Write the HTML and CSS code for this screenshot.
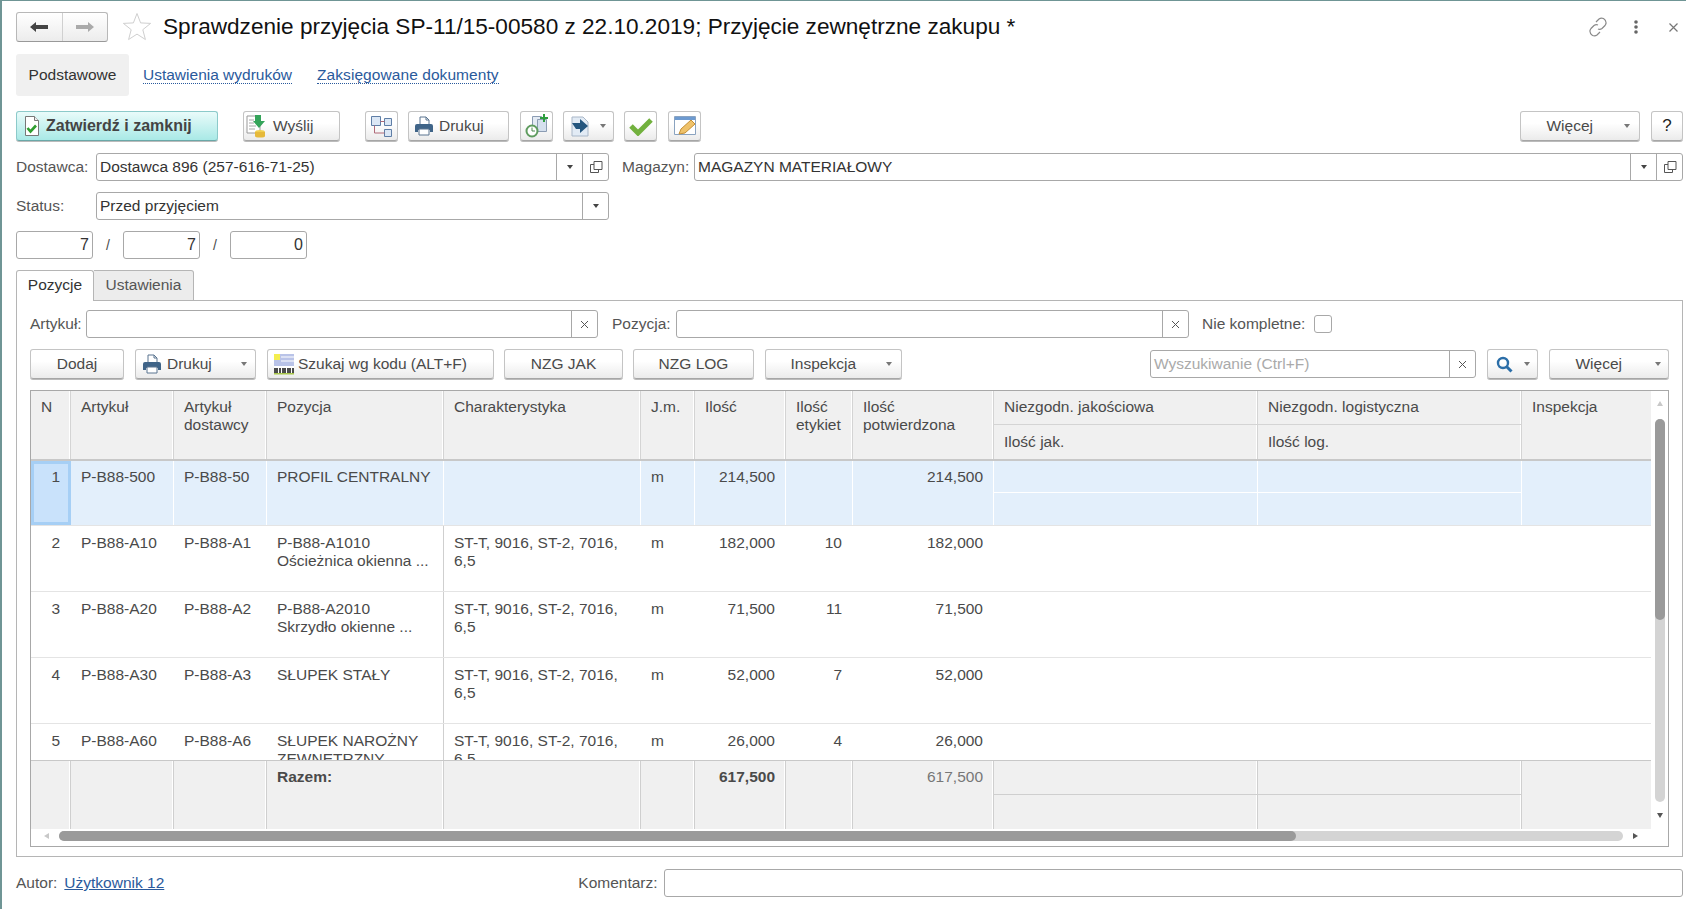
FILE: index.html
```html
<!DOCTYPE html>
<html>
<head>
<meta charset="utf-8">
<title>Sprawdzenie przyjęcia</title>
<link rel="stylesheet" href="styles.css">
</head>
<body>
<svg class="defs" width="0" height="0">
	<symbol id="printer" viewBox="0 0 20 20">
		<path d="M6 1h6l3 3v5H6z" fill="#fff" stroke="#5b7590"/>
		<path d="M12 1v3h3" fill="none" stroke="#5b7590"/>
		<path d="M1 10q0-2 2-2h14q2 0 2 2v6h-3v-2H4v2H1z" fill="#3f6488"/>
		<path d="M5 13h10v6H5z" fill="#fff" stroke="#5b7590"/>
	</symbol>
	<symbol id="open" viewBox="0 0 14 14">
		<path d="M5 1.500h8v8H5z" fill="none" stroke="#555"/>
		<path d="M5 4.500H1.500v8h8V9.500" fill="none" stroke="#555"/>
	</symbol>
</svg>
<div class="page">
	<div class="head">
		<div class="nav">
			<button class="nav-btn">
				<svg width="20" height="12" viewBox="0 0 20 12"><path d="M7 1 1 6l6 5V8h12V4H7z" fill="#444"/></svg>
			</button>
			<button class="nav-btn">
				<svg width="20" height="12" viewBox="0 0 20 12"><path d="M13 1l6 5-6 5V8H1V4h12z" fill="#aaa"/></svg>
			</button>
		</div>
		<svg class="star" width="30" height="30" viewBox="0 0 30 30"><path d="M15 1.500l3.600 9.400 10 .5-7.800 6.300 2.600 9.800L15 22.100 6.600 27.500l2.600-9.800-7.800-6.300 10-.5z" fill="#fff" stroke="#cfcfcf"/></svg>
		<h1 class="title">Sprawdzenie przyjęcia SP-11/15-00580 z 22.10.2019; Przyjęcie zewnętrzne zakupu *</h1>
		<div class="head-tools">
			<svg width="20" height="20" viewBox="0 0 20 20" fill="none" stroke="#8a8a8a" stroke-width="1.200"><path d="M8 5l3-3q2-1.500 4.500-.5 3 2 2.500 5-.3 1-1 2l-3 3q-2 1.500-4 .5"/><path d="M12 15l-3 3q-2 1.500-4.500.5-3-2-2.500-5 .3-1 1-2l3-3q2-1.500 4-.5"/></svg>
			<svg class="dots" width="6" height="14" viewBox="0 0 6 14"><circle cx="3" cy="2" r="1.800" fill="#666"/><circle cx="3" cy="7" r="1.800" fill="#666"/><circle cx="3" cy="12" r="1.800" fill="#666"/></svg>
			<svg class="close" width="9" height="9" viewBox="0 0 9 9"><path d="M.5.500l8 8M8.500.500l-8 8" stroke="#777" stroke-width="1.200"/></svg>
		</div>
	</div>

	<div class="sections">
		<span class="section-on">Podstawowe</span>
		<a class="section-link">Ustawienia wydruków</a>
		<a class="section-link">Zaksięgowane dokumenty</a>
	</div>

	<div class="toolbar">
		<button class="btn btn-main w-main">
			<svg width="16" height="20" viewBox="0 0 16 20"><path d="M1.500.500h9l4 4v15h-13z" fill="#fff" stroke="#777"/><path d="M10.500.500v4h4" fill="#eee" stroke="#777"/><path d="M3.500 12l3 3.500 5.500-6" fill="none" stroke="#2f9e2f" stroke-width="2.600"/></svg>
			<b>Zatwierdź i zamknij</b>
		</button>
		<button class="btn w-send ml-25">
			<svg width="22" height="24" viewBox="0 0 22 24"><path d="M1 2h13v17H1z" fill="#fff" stroke="#999"/><path d="M3 6h5M3 9h5M3 12h7M3 15h6" stroke="#a8a8a8"/><path d="M9 1h6v6h4l-6 7-6-7h2z" fill="#35a45a"/><ellipse cx="14" cy="18" rx="5" ry="2" fill="#f0cf50"/><path d="M9 18v4q0 1.500 5 1.500t5-1.500v-4" fill="#e6b93a"/></svg>
			<span>Wyślij</span>
		</button>
		<button class="btn w-icon ml-25">
			<svg width="24" height="24" viewBox="0 0 24 24"><path d="M1.500 2.500h9v9h-9zM14.500 4.500h7v7h-7zM14.500 15.500h7v7h-7z" fill="#dbe7f5" stroke="#5f7ea6"/><path d="M4.500 11.500v7.500h10M10.500 7.500h4" fill="none" stroke="#b06a78"/></svg>
		</button>
		<button class="btn w-print ml-10">
			<svg width="20" height="20"><use href="#printer"/></svg>
			<span>Drukuj</span>
		</button>
		<button class="btn w-icon ml-11">
			<svg width="24" height="24" viewBox="0 0 24 24"><path d="M7.500 2.500h9v12h-9z" fill="#e4ebf4" stroke="#8b9cb3"/><path d="M12.500 5.500h9v12h-9z" fill="#d5e0ee" stroke="#8b9cb3"/><path d="M18 0h2v3h3v2h-3v3h-2V5h-3V3h3z" fill="#2e9e3f"/><circle cx="7" cy="17" r="5.500" fill="#fff" stroke="#5f9c5f" stroke-width="2"/><path d="M7 13.500V17h3" fill="none" stroke="#4c8a4c"/></svg>
		</button>
		<button class="btn w-menu ml-10">
			<svg width="24" height="24" viewBox="0 0 24 24"><path d="M3 3h11l5 5v14H3z" fill="#e2ebf5" stroke="#a9b7c8"/><path d="M3 9h8V5l8 7-8 7v-4H7z" fill="#24567f"/></svg>
			<i class="caret"></i>
		</button>
		<button class="btn w-icon ml-10">
			<svg width="24" height="20" viewBox="0 0 24 20"><path d="M2 10l7 7L22 4" fill="none" stroke="#72b13e" stroke-width="5"/></svg>
		</button>
		<button class="btn w-icon ml-11">
			<svg width="24" height="24" viewBox="0 0 24 24"><path d="M1.500 2.500h21v18h-21z" fill="#fff" stroke="#8aa3c0"/><path d="M2 3h20v3H2z" fill="#6d9ad0"/><path d="M6 20l2-5L18 6l4 4-10 9z" fill="#efc26a" stroke="#c48f35"/></svg>
		</button>
		<button class="btn w-more push">
			<span>Więcej</span>
			<i class="caret"></i>
		</button>
		<button class="btn w-help ml-11"><span class="help">?</span></button>
	</div>

	<div class="form-row row-first">
		<label class="lbl w-lbl">Dostawca:</label>
		<div class="field w-supplier">
			<span class="field-text">Dostawca 896 (257-616-71-25)</span>
			<span class="field-btn"><i class="caret dark"></i></span>
			<span class="field-btn"><svg width="14" height="14"><use href="#open"/></svg></span>
		</div>
		<label class="lbl w-lbl2">Magazyn:</label>
		<div class="field w-store">
			<span class="field-text">MAGAZYN MATERIAŁOWY</span>
			<span class="field-btn"><i class="caret dark"></i></span>
			<span class="field-btn"><svg width="14" height="14"><use href="#open"/></svg></span>
		</div>
	</div>

	<div class="form-row row-status">
		<label class="lbl w-lbl">Status:</label>
		<div class="field w-supplier">
			<span class="field-text">Przed przyjęciem</span>
			<span class="field-btn"><i class="caret dark"></i></span>
		</div>
	</div>

	<div class="form-row row-counts">
		<div class="field w-count"><span class="field-text right">7</span></div>
		<span class="sep">/</span>
		<div class="field w-count"><span class="field-text right">7</span></div>
		<span class="sep">/</span>
		<div class="field w-count"><span class="field-text right">0</span></div>
	</div>

	<div class="tabs">
		<span class="tab tab-on">Pozycje</span>
		<span class="tab">Ustawienia</span>
	</div>

	<div class="panel">
		<div class="filter">
			<label class="lbl w-art">Artykuł:</label>
			<div class="field w-art-f">
				<span class="field-text"></span>
				<span class="field-btn"><svg width="9" height="9" viewBox="0 0 9 9"><path d="M1 1l7 7M8 1L1 8" stroke="#555"/></svg></span>
			</div>
			<label class="lbl w-poz">Pozycja:</label>
			<div class="field w-poz-f">
				<span class="field-text"></span>
				<span class="field-btn"><svg width="9" height="9" viewBox="0 0 9 9"><path d="M1 1l7 7M8 1L1 8" stroke="#555"/></svg></span>
			</div>
			<label class="lbl w-nk">Nie kompletne:</label>
			<i class="check"></i>
		</div>

		<div class="toolbar2">
			<button class="btn w-add">Dodaj</button>
			<button class="btn w-print2">
				<svg width="20" height="20"><use href="#printer"/></svg>
				<span>Drukuj</span>
				<i class="caret"></i>
			</button>
			<button class="btn w-code">
				<svg width="22" height="22" viewBox="0 0 22 22"><path d="M1 1h20v12H1z" fill="#b9c3e8"/><path d="M1 1h6v6H1z" fill="#f4ee4e"/><path d="M8 4h13M8 8h13" stroke="#fff"/><path d="M1 13h20v8H1z" fill="#fff"/><path d="M2 15v5M4 15v5M7 15v5M10 15v5M12 15v5M15 15v5M17 15v5M20 15v5" stroke="#111" stroke-width="1.500"/><path d="M1 20h20v1.500H1z" fill="#a8c64a"/></svg>
				<span>Szukaj wg kodu (ALT+F)</span>
			</button>
			<button class="btn w-nzg">NZG JAK</button>
			<button class="btn w-nzg2">NZG LOG</button>
			<button class="btn w-insp">
				<span>Inspekcja</span>
				<i class="caret"></i>
			</button>
			<div class="field w-search push">
				<span class="field-text hint">Wyszukiwanie (Ctrl+F)</span>
				<span class="field-btn"><svg width="9" height="9" viewBox="0 0 9 9"><path d="M1 1l7 7M8 1L1 8" stroke="#555"/></svg></span>
			</div>
			<button class="btn w-find">
				<svg width="17" height="17" viewBox="0 0 17 17"><circle cx="7" cy="7" r="5" fill="none" stroke="#2b6ea8" stroke-width="2.400"/><path d="M10.500 10.500l5 5" stroke="#2b6ea8" stroke-width="3"/></svg>
				<i class="caret"></i>
			</button>
			<button class="btn w-more2">
				<span>Więcej</span>
				<i class="caret"></i>
			</button>
		</div>

		<div class="table">
			<div class="table-main">
				<div class="table-cols">
					<div class="g-row thead">
						<div class="c tall">N</div>
						<div class="c tall">Artykuł</div>
						<div class="c tall">Artykuł<br>dostawcy</div>
						<div class="c tall">Pozycja</div>
						<div class="c tall">Charakterystyka</div>
						<div class="c tall">J.m.</div>
						<div class="c tall">Ilość</div>
						<div class="c tall">Ilość<br>etykiet</div>
						<div class="c tall">Ilość<br>potwierdzona</div>
						<div class="c half">Niezgodn. jakościowa</div>
						<div class="c half">Niezgodn. logistyczna</div>
						<div class="c tall">Inspekcja</div>
						<div class="c half-b c-10">Ilość jak.</div>
						<div class="c half-b c-11">Ilość log.</div>
					</div>
					<div class="tbody">
						<div class="g-row tr tr-sel">
							<div class="c tall num cur">1</div>
							<div class="c tall">P-B88-500</div>
							<div class="c tall">P-B88-50</div>
							<div class="c tall">PROFIL CENTRALNY</div>
							<div class="c tall"></div>
							<div class="c tall">m</div>
							<div class="c tall num">214,500</div>
							<div class="c tall num"></div>
							<div class="c tall num">214,500</div>
							<div class="c half"></div>
							<div class="c half"></div>
							<div class="c tall"></div>
							<div class="c c-10"></div>
							<div class="c c-11"></div>
						</div>
						<div class="g-row tr">
							<div class="c num">2</div>
							<div class="c">P-B88-A10</div>
							<div class="c">P-B88-A1</div>
							<div class="c line">P-B88-A1010<br>Ościeżnica okienna ...</div>
							<div class="c">ST-T, 9016, ST-2, 7016, 6,5</div>
							<div class="c">m</div>
							<div class="c num">182,000</div>
							<div class="c num">10</div>
							<div class="c num">182,000</div>
						</div>
						<div class="g-row tr">
							<div class="c num">3</div>
							<div class="c">P-B88-A20</div>
							<div class="c">P-B88-A2</div>
							<div class="c line">P-B88-A2010<br>Skrzydło okienne ...</div>
							<div class="c">ST-T, 9016, ST-2, 7016, 6,5</div>
							<div class="c">m</div>
							<div class="c num">71,500</div>
							<div class="c num">11</div>
							<div class="c num">71,500</div>
						</div>
						<div class="g-row tr">
							<div class="c num">4</div>
							<div class="c">P-B88-A30</div>
							<div class="c">P-B88-A3</div>
							<div class="c line">SŁUPEK STAŁY</div>
							<div class="c">ST-T, 9016, ST-2, 7016, 6,5</div>
							<div class="c">m</div>
							<div class="c num">52,000</div>
							<div class="c num">7</div>
							<div class="c num">52,000</div>
						</div>
						<div class="g-row tr">
							<div class="c num">5</div>
							<div class="c">P-B88-A60</div>
							<div class="c">P-B88-A6</div>
							<div class="c line">SŁUPEK NAROŻNY ZEWNĘTRZNY</div>
							<div class="c">ST-T, 9016, ST-2, 7016, 6,5</div>
							<div class="c">m</div>
							<div class="c num">26,000</div>
							<div class="c num">4</div>
							<div class="c num">26,000</div>
						</div>
					</div>
					<div class="g-row tfoot">
						<div class="c tall"></div>
						<div class="c tall"></div>
						<div class="c tall"></div>
						<div class="c tall"><b>Razem:</b></div>
						<div class="c tall"></div>
						<div class="c tall"></div>
						<div class="c tall num"><b>617,500</b></div>
						<div class="c tall"></div>
						<div class="c tall num soft">617,500</div>
						<div class="c half"></div>
						<div class="c half"></div>
						<div class="c tall"></div>
						<div class="c c-10"></div>
						<div class="c c-11"></div>
					</div>
				</div>
				<div class="vscroll">
					<i class="arrow-up"></i>
					<div class="v-track"><div class="v-thumb"></div></div>
					<i class="arrow-down"></i>
				</div>
			</div>
			<div class="hscroll">
				<i class="arrow-left"></i>
				<div class="h-track"><div class="h-thumb"></div></div>
				<i class="arrow-right"></i>
			</div>
		</div>
	</div>

	<div class="bottom">
		<label class="lbl">Autor:</label>
		<a class="author">Użytkownik 12</a>
		<label class="lbl komentarz">Komentarz:</label>
		<div class="field grow"></div>
	</div>
</div>
</body>
</html>
```

FILE: styles.css
```css
*{margin: 0;padding: 0;box-sizing: border-box;}
html,body{height: 100%;overflow: hidden;background: #fff;}
body{
	font-family: "Liberation Sans", Arial, sans-serif;
	font-size: 15.5px;
	color: #4a4a4a;
}
.defs{position: absolute;}
i{font-style: normal;display: block;}
button{font: inherit;color: inherit;}

.page{
	height: 909px;
	border-top: 1px solid #6f9595;
	border-left: 2px solid #6f9595;
	padding: 0 3px 0 14px;
}

/* head */
.head{display: flex;align-items: center;height: 30px;margin-top: 11px;}
.nav{display: flex;width: 92px;height: 30px;border: 1px solid #b8b8b8;border-bottom-color: #999;border-radius: 3px;background: linear-gradient(#fff,#ececec);}
.nav-btn{flex: 1;border: 0;background: none;display: flex;align-items: center;justify-content: center;}
.nav-btn + .nav-btn{border-left: 1px solid #d0d0d0;}
.star{margin-left: 14px;}
.title{margin-left: 11px;font-size: 22.6px;font-weight: normal;color: #111;white-space: nowrap;line-height: 30px;}
.head-tools{margin-left: auto;display: flex;align-items: center;padding-right: 5px;}
.dots{margin-left: 25px;}
.close{margin-left: 30px;}

/* sections */
.sections{display: flex;align-items: center;height: 42px;margin-top: 12px;}
.section-on{width: 113px;height: 42px;line-height: 42px;text-align: center;background: #f0f0f0;border-radius: 3px;color: #333;}
.section-link{margin-left: 14px;margin-right: 11px;color: #2a5a9c;border-bottom: 1px dotted #2a5a9c;line-height: 17px;}
.section-link:last-child{letter-spacing: .07px;}

/* buttons */
.toolbar,.toolbar2{display: flex;align-items: center;}
.toolbar{margin-top: 15px;height: 30px;}
.btn{
	height: 30px;
	display: flex;
	align-items: center;
	justify-content: center;
	gap: 5px;
	border: 1px solid #c4c4c4;
	border-bottom-color: #a6a6a6;
	border-radius: 3px;
	background: linear-gradient(#fff 40%,#ebebeb);
	box-shadow: 0 1px 0 #bbb;
	white-space: nowrap;
}
.btn-main{background: linear-gradient(#e9fbfa,#a9e9e6);border-color: #8ccaca;border-bottom-color: #6aa8a8;color: #444;}
.btn-main b{font-size: 16px;}
.caret{width: 0;height: 0;border: 3px solid transparent;border-top: 4px solid #777;border-bottom: 0;}
.caret.dark{border-top-color: #444;}
.w-main{width: 202px;justify-content: flex-start;padding-left: 7px;gap: 6px;}
.w-send{width: 97px;justify-content: flex-start;padding-left: 2px;}
.w-icon{width: 33px;}
.w-print{width: 101px;justify-content: flex-start;padding-left: 5px;}
.w-menu{width: 51px;justify-content: space-between;padding: 0 7px 0 5px;}
.w-more{width: 120px;justify-content: flex-end;gap: 31px;padding-right: 9px;}
.w-help{width: 32px;}
.help{font-size: 17px;color: #222;}
.ml-25{margin-left: 25px;}
.ml-10{margin-left: 10px;}
.ml-11{margin-left: 11px;}
.push{margin-left: auto;}

/* fields */
.form-row{display: flex;align-items: center;height: 28px;}
.row-first{margin-top: 12px;}
.row-status{margin-top: 11px;}
.row-counts{margin-top: 11px;}
.lbl{white-space: nowrap;color: #555;}
.w-lbl{width: 80px;}
.w-lbl2{width: 72px;margin-left: 13px;}
.field{height: 28px;display: flex;border: 1px solid #a8a8a8;border-radius: 3px;background: #fff;color: #333;}
.field-text{flex: 1;line-height: 26px;padding: 0 3px;white-space: nowrap;overflow: hidden;}
.field-text.right{text-align: right;}
.field-text.hint{color: #aaa;}
.field-btn{width: 26px;border-left: 1px solid #a8a8a8;display: flex;align-items: center;justify-content: center;}
.w-supplier{width: 513px;}
.w-store{width: 989px;}
.w-count{width: 77px;font-size: 16px;}
.sep{width: 30px;text-align: center;font-size: 14px;}
.grow{flex: 1;}

/* tabs */
.tabs{display: flex;height: 31px;margin-top: 11px;}
.tab{width: 100px;height: 31px;line-height: 28px;text-align: center;background: #ececec;border: 1px solid #b5b5b5;border-left: 0;border-radius: 0 3px 0 0;color: #555;}
.tab-on{width: 78px;background: #fff;border-left: 1px solid #b5b5b5;border-bottom: 0;border-radius: 3px 3px 0 0;color: #333;position: relative;z-index: 1;}

.panel{height: 557px;margin-top: -1px;border: 1px solid #b5b5b5;padding: 9px 13px 0 13px;}
.filter{display: flex;align-items: center;height: 28px;}
.w-art{width: 56px;}
.w-art-f{width: 512px;}
.w-poz{width: 64px;margin-left: 14px;}
.w-poz-f{width: 513px;}
.w-nk{width: 112px;margin-left: 13px;}
.check{width: 18px;height: 18px;border: 1px solid #a8a8a8;border-radius: 3px;}

.toolbar2{margin-top: 11px;height: 30px;}
.w-add{width: 94px;}
.w-print2{width: 121px;margin-left: 11px;justify-content: flex-start;padding-left: 6px;}
.w-print2 .caret{margin-left: auto;margin-right: 8px;}
.w-code{width: 227px;margin-left: 11px;justify-content: flex-start;padding-left: 5px;gap: 3px;}
.w-nzg{width: 119px;margin-left: 10px;}
.w-nzg2{width: 121px;margin-left: 10px;}
.w-insp{width: 137px;margin-left: 11px;justify-content: flex-end;gap: 30px;padding-right: 9px;}
.w-search{width: 326px;}
.w-find{width: 51px;margin-left: 11px;gap: 11px;}
.w-more2{width: 120px;margin-left: 11px;justify-content: flex-end;gap: 33px;padding-right: 7px;}

/* table */
.table{height: 457px;margin-top: 11px;border: 1px solid #a8a8a8;display: flex;flex-direction: column;}
.table-main{flex: 1;display: flex;min-height: 0;}
.table-cols{width: 1620px;display: flex;flex-direction: column;}
.g-row{
	display: grid;
	grid-template-columns: 40px 103px 93px 177px 197px 54px 91px 67px 141px 264px 264px 129px;
	grid-template-rows: 1fr 1fr;
}
.c{padding: 7px 10px 0 10px;line-height: 18px;}
.tall{grid-row: span 2;}
.c-10{grid-column: 10;}
.c-11{grid-column: 11;}
.num{text-align: right;}

.thead{height: 70px;background: #f0f0f0;border-bottom: 2px solid #c8c8c8;}
.thead .c{border-right: 1px solid #d4d4d4;box-shadow: inset -1px 0 0 #fff;}
.thead .c:nth-child(12){border-right: 0;box-shadow: none;}
.thead .half{border-bottom: 1px solid #d4d4d4;}
.thead .half-b{padding-top: 8px;}

.tbody{height: 299px;overflow: hidden;}
.tr{height: 66px;grid-template-rows: auto;border-bottom: 1px solid #e4e4e4;}
.tr .c{padding-top: 8px;}
.tr .num{padding-right: 11px;}
.line{border-right: 1px solid #cfcfcf;}
.tr-sel{height: 65px;grid-template-rows: 1fr 1fr;background: #e3effb;}
.tr-sel .c{border-right: 1px solid #fff;padding-top: 7px;}
.tr-sel .num{padding-right: 10px;}
.tr-sel .half{border-bottom: 1px solid #fff;}
.tr-sel .c:nth-child(12){border-right: 0;}
.tr-sel .cur{background: #c9e2fb;border: 3px solid #a6cff5;padding: 4px 8px 0 0;}

.tfoot{height: 69px;background: #f0f0f0;border-top: 1px solid #c8c8c8;}
.tfoot .c{border-right: 1px solid #cfcfcf;box-shadow: inset -1px 0 0 #fff;}
.tfoot .c:nth-child(12){border-right: 0;box-shadow: none;}
.tfoot .half{border-bottom: 1px solid #cfcfcf;}
.tfoot b{color: #4a4a4a;}
.soft{color: #777;}

/* scrollbars */
.vscroll{flex: 1;display: flex;flex-direction: column;align-items: center;padding-top: 10px;}
.arrow-up{border: 3px solid transparent;border-bottom: 5px solid #c8c8c8;border-top: 0;}
.v-track{width: 10px;height: 383px;margin-top: 13px;background: #d4d4d4;border-radius: 5px;}
.v-thumb{height: 201px;background: #9a9a9a;border-radius: 5px;}
.arrow-down{margin-top: 11px;border: 3px solid transparent;border-top: 5px solid #555;border-bottom: 0;}
.hscroll{height: 17px;display: flex;align-items: center;padding: 0 0 3px 13px;}
.arrow-left{border: 3px solid transparent;border-right: 5px solid #c8c8c8;border-left: 0;}
.h-track{width: 1564px;height: 10px;margin-left: 10px;background: #d4d4d4;border-radius: 5px;}
.h-thumb{width: 1237px;height: 10px;background: #9a9a9a;border-radius: 5px;}
.arrow-right{margin-left: 10px;border: 3px solid transparent;border-left: 5px solid #555;border-right: 0;}

/* bottom */
.bottom{display: flex;align-items: center;height: 28px;margin-top: 12px;}
.author{margin-left: 7px;color: #2a5a9c;text-decoration: underline;}
.komentarz{margin-left: 414px;margin-right: 6px;}
```
